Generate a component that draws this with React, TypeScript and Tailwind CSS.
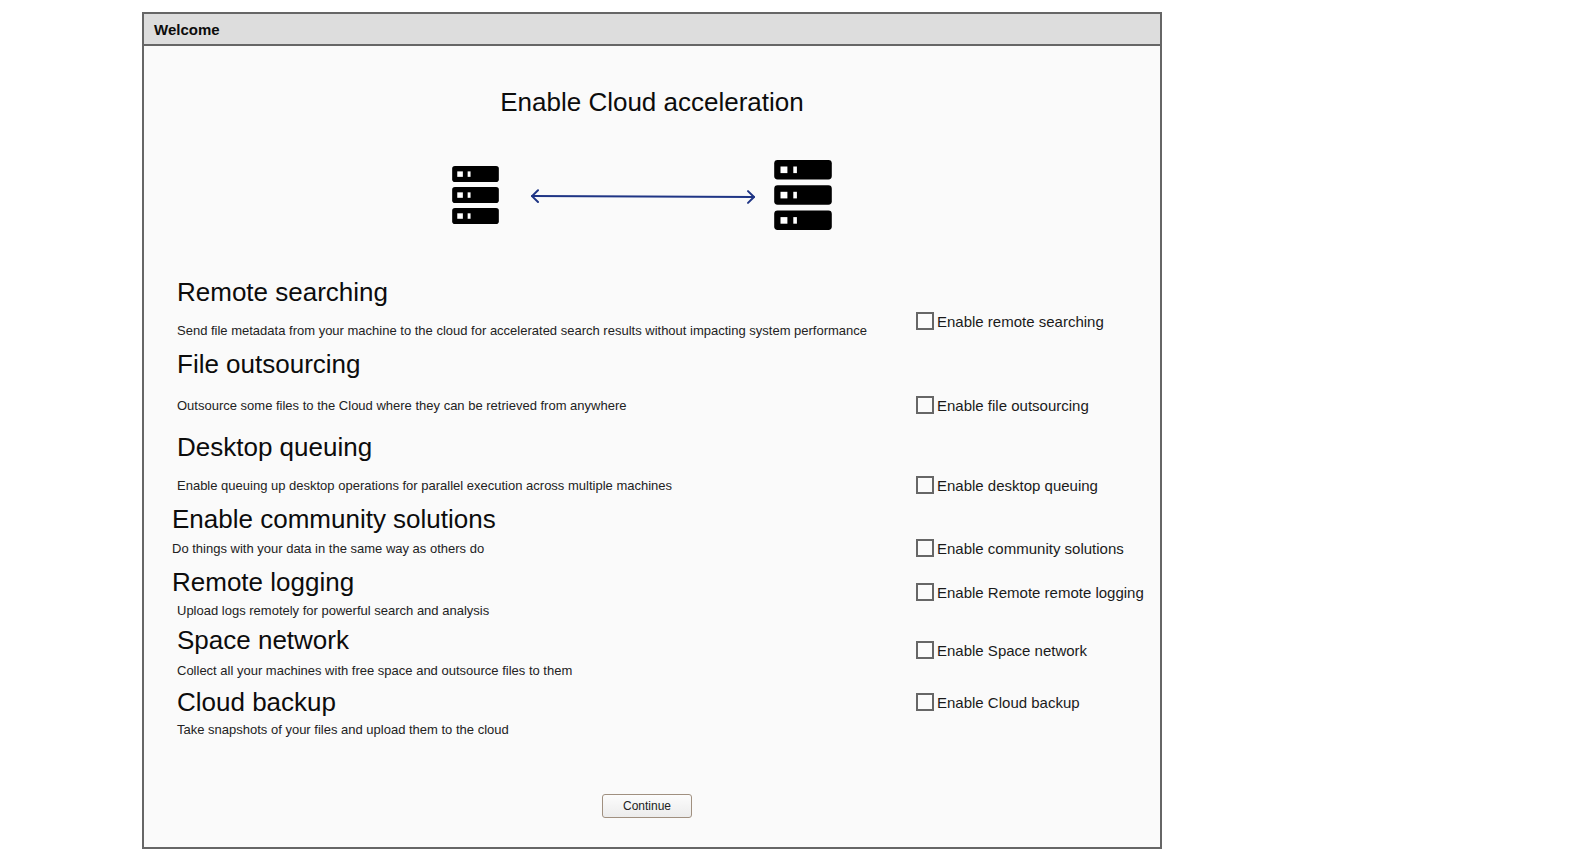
type Option = {
  id: string;
  title: string;
  description: string;
  label: string;
  row: string;
  heading: string;
  text: string;
  control: string;
};

const options: Option[] = [
  {
    id: "remote-searching",
    title: "Remote searching",
    description:
      "Send file metadata from your machine to the cloud for accelerated search results without impacting system performance",
    label: "Enable remote searching",
    row: "pb-[10px]",
    heading: "pl-[5px]",
    text: "mt-4 pl-[5px]",
    control: "pt-[35px]",
  },
  {
    id: "file-outsourcing",
    title: "File outsourcing",
    description: "Outsource some files to the Cloud where they can be retrieved from anywhere",
    label: "Enable file outsourcing",
    row: "pb-[18px]",
    heading: "pl-[5px]",
    text: "mt-[19px] pl-[5px]",
    control: "pt-[47px]",
  },
  {
    id: "desktop-queuing",
    title: "Desktop queuing",
    description: "Enable queuing up desktop operations for parallel execution across multiple machines",
    label: "Enable desktop queuing",
    row: "pb-[10px]",
    heading: "pl-[5px]",
    text: "mt-4 pl-[5px]",
    control: "pt-[44px]",
  },
  {
    id: "community-solutions",
    title: "Enable community solutions",
    description: "Do things with your data in the same way as others do",
    label: "Enable community solutions",
    row: "pb-[10px]",
    heading: "",
    text: "mt-[7px]",
    control: "pt-[35px]",
  },
  {
    id: "remote-logging",
    title: "Remote logging",
    description: "Upload logs remotely for powerful search and analysis",
    label: "Enable Remote remote logging",
    row: "pb-[6px]",
    heading: "",
    text: "mt-[6px] pl-[5px]",
    control: "pt-4",
  },
  {
    id: "space-network",
    title: "Space network",
    description: "Collect all your machines with free space and outsource files to them",
    label: "Enable Space network",
    row: "pb-[8px]",
    heading: "pl-[5px]",
    text: "mt-2 pl-[5px]",
    control: "pt-4",
  },
  {
    id: "cloud-backup",
    title: "Cloud backup",
    description: "Take snapshots of your files and upload them to the cloud",
    label: "Enable Cloud backup",
    row: "",
    heading: "pl-[5px]",
    text: "mt-[5px] pl-[5px]",
    control: "pt-[6px]",
  },
];

function ServerIcon({ className }: { className: string }) {
  return (
    <svg viewBox="0 0 58 70" preserveAspectRatio="none" className={className} aria-hidden="true">
      {[0, 25.3, 50.6].map((y) => (
        <g key={y}>
          <rect x="0.2" y={y} width="57.6" height="19.4" rx="3.4" fill="#000" />
          <rect x="6.5" y={y + 6.5} width="6.9" height="6.6" fill="#fff" />
          <rect x="19.3" y={y + 6.5} width="3.6" height="6.6" fill="#fff" />
        </g>
      ))}
    </svg>
  );
}

function LinkArrow() {
  return (
    <svg
      viewBox="0 0 226 16"
      className="mt-1 mr-[18px] ml-[31px] h-4 w-[226px]"
      fill="none"
      stroke="#1f3585"
      strokeWidth="2"
      strokeLinecap="round"
      strokeLinejoin="round"
      aria-hidden="true"
    >
      <path d="M2 7.1 224 8" />
      <path d="M8 1.2 2 7.1 8 13" />
      <path d="M218 2.1 224 8 218 13.9" />
    </svg>
  );
}

export default function App() {
  return (
    <div className="min-h-screen bg-white py-3 pl-[142px] font-['Liberation_Sans',Arial,sans-serif] text-[#0c0c0c]">
      <main className="w-full max-w-[1020px] border-2 border-[#666666] bg-[#fafafa]">
        <header className="border-b-2 border-[#666666] bg-[#dddddd] px-[10px] pt-[2px]">
          <h1 className="text-[15px] leading-[28px] font-bold">Welcome</h1>
        </header>

        <div className="pt-[41px] pb-[29px]">
          <h2 className="text-center text-[26px] leading-[30px]">Enable Cloud acceleration</h2>

          <div className="mt-[43px] flex items-center justify-center pr-[21px]">
            <ServerIcon className="h-[58px] w-[47px]" />
            <LinkArrow />
            <ServerIcon className="h-[70px] w-[58px]" />
          </div>

          <div className="mt-[47px] pl-7">
            {options.map((o) => (
              <section key={o.id} className={`flex items-start ${o.row}`}>
                <div className="min-w-0 flex-1">
                  <h3 className={`text-[26px] leading-[30px] ${o.heading}`}>{o.title}</h3>
                  <p className={`text-[13px] leading-4 text-[#222222] ${o.text}`}>{o.description}</p>
                </div>
                <div className={`-mb-2 w-[244px] shrink-0 ${o.control}`}>
                  <label
                    htmlFor={o.id}
                    className="flex items-start gap-[3px] text-[15px] leading-[18px] text-[#1a1a1a]"
                  >
                    <input
                      id={o.id}
                      type="checkbox"
                      className="size-[18px] shrink-0 appearance-none border-2 border-[#666666] bg-[#fafafa] checked:bg-[#666666]"
                    />
                    <span className="pt-px">{o.label}</span>
                  </label>
                </div>
              </section>
            ))}
          </div>

          <div className="mt-14 flex justify-center pr-[10px]">
            <button
              type="button"
              className="h-6 w-[90px] rounded-[3px] border border-[#a09080] bg-linear-to-b from-[#fcfcfc] to-[#ececec] text-[12px] leading-4 text-[#222222]"
            >
              Continue
            </button>
          </div>
        </div>
      </main>
    </div>
  );
}
